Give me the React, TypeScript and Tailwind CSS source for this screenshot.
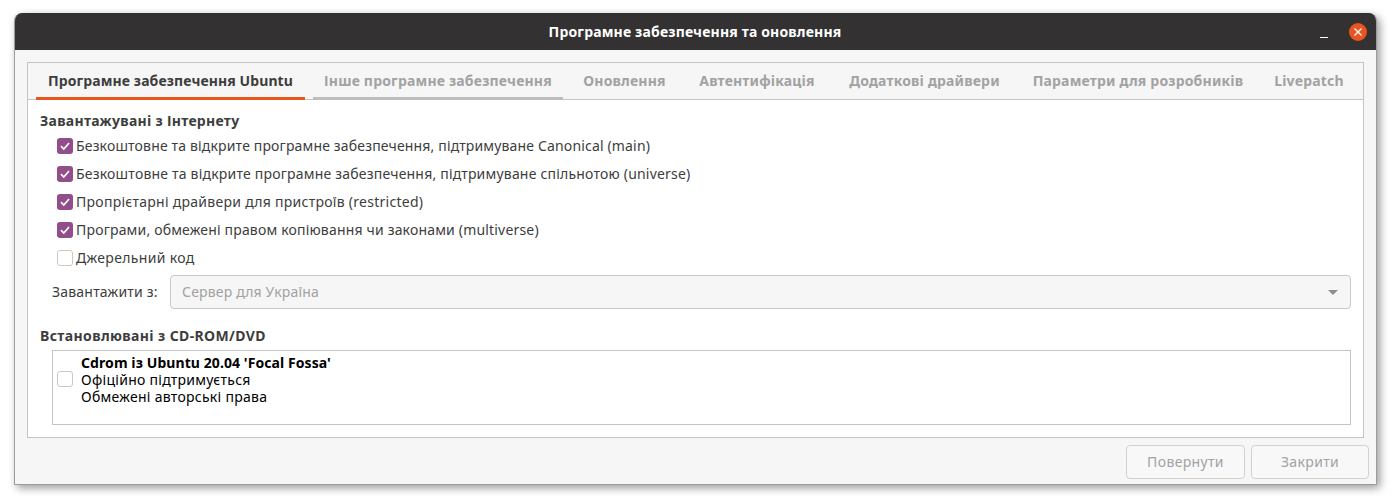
import React from "react";

function Check({ on, className = "" }: { on?: boolean; className?: string }) {
  return on ? (
    <span className={"flex h-4 w-4 shrink-0 items-center justify-center rounded-[3px] bg-[#924d8b] " + className}>
      <svg width="12" height="12" viewBox="0 0 12 12" fill="none">
        <path d="M2 6.2 L4.8 9 L10 3" stroke="#fff" strokeWidth="1.7" />
      </svg>
    </span>
  ) : (
    <span className={"h-4 w-4 shrink-0 rounded-[3px] border border-[#cdc7c2] bg-white " + className} />
  );
}

function Row({ on, text, track = "tracking-[0.16px]" }: { on?: boolean; text: string; track?: string }) {
  return (
    <div className="flex h-7 items-center gap-[3px] pl-[17px] text-[#3d3d3d]">
      <Check on={on} />
      <span className={track}>{text}</span>
    </div>
  );
}

const tabs: [string, string][] = [
  ["Інше програмне забезпечення", "w-[250px] border-[#bdbdbd]"],
  ["Оновлення", "w-[107px] border-transparent"],
  ["Автентифікація", "w-[142px] border-transparent"],
  ["Додаткові драйвери", "w-[177px] border-transparent"],
  ["Параметри для розробників", "w-[234px] border-transparent"],
  ["Livepatch", "w-[92px] border-transparent"],
];

export default function App() {
  return (
    <div className="h-[503px] w-[1395px] bg-white pl-[14px] pt-[13px] font-['Noto_Sans',sans-serif] text-[14px] leading-[20px]">
      <div className="flex h-[472px] w-[1363px] flex-col overflow-hidden rounded-t-[8px] border-x border-b border-[#9c9c9c] bg-[#f6f6f6] shadow-[3px_3px_8px_rgba(0,0,0,0.4)]">
        <div className="-mx-px flex h-[37px] shrink-0 items-center bg-[#333131]">
          <div className="flex-1 pl-[56px] text-center text-[14px] font-bold tracking-[0.17px] text-white">
            Програмне забезпечення та оновлення
          </div>
          <svg width="10" height="10" viewBox="0 0 10 10" className="mr-[19px] mt-[4px]">
            <path d="M0 8.5 H8" stroke="#fff" strokeWidth="1" />
          </svg>
          <span className="mr-[10px] flex h-[18px] w-[18px] items-center justify-center rounded-full bg-[#e95420]">
            <svg width="10" height="10" viewBox="0 0 10 10">
              <path d="M1.5 1.5 L8.5 8.5 M8.5 1.5 L1.5 8.5" stroke="#fff" strokeWidth="1.3" />
            </svg>
          </span>
        </div>

        <div className="mx-[12px] mt-[12px] flex h-[376px] flex-col border border-[#c4c4c4] bg-white">
          <div className="flex h-[37px] shrink-0 gap-[8px] border-b border-[#c4c4c4] bg-[#f6f6f6] pl-[8px] font-bold tracking-[0.18px]">
            <div className="flex h-[37px] w-[269px] items-center justify-center border-b-[3px] border-[#e95420] pt-[2px] text-[#3d3d3d]">
              <span className="tracking-[0.1px]">Програмне забезпечення Ubuntu</span>
            </div>
            {tabs.map(([t, c]) => (
              <div key={t} className={"flex h-[37px] items-center justify-center border-b-[3px] pt-[2px] text-[#a2a2a2] " + c}>
                {t}
              </div>
            ))}
          </div>

          <div className="flex-1 px-[12px]">
            <div className="pt-[11px] font-bold tracking-[0.28px] text-[#3d3d3d]">Завантажувані з Інтернету</div>
            <div className="mt-[1px]">
              <Row on text="Безкоштовне та відкрите програмне забезпечення, підтримуване Canonical (main)" />
              <Row on text="Безкоштовне та відкрите програмне забезпечення, підтримуване спільнотою (universe)" track="tracking-[0.2px]" />
              <Row on text="Пропрієтарні драйвери для пристроїв (restricted)" track="tracking-[0.27px]" />
              <Row on text="Програми, обмежені правом копіювання чи законами (multiverse)" track="tracking-[0.18px]" />
              <Row text="Джерельний код" track="tracking-[0.35px]" />
            </div>
            <div className="mt-[3px] flex h-[34px] items-center pl-[12px] text-[#3d3d3d]">
              <span className="w-[118px] shrink-0 tracking-[0.2px]">Завантажити з:</span>
              <div className="flex h-[34px] flex-1 items-center justify-between rounded-[4px] border border-[#cdc7c2] bg-[#f6f6f6] pl-[11px] pr-[12px] tracking-[0.17px] text-[#a2a2a2]">
                <span>Сервер для Україна</span>
                <span className="h-0 w-0 border-x-[5px] border-t-[5px] border-x-transparent border-t-[#8e8e8e]" />
              </div>
            </div>
            <div className="mt-[17px] font-bold tracking-[0.38px] text-[#3d3d3d]">Встановлювані з CD-ROM/DVD</div>
            <div className="ml-[12px] mt-[4px] flex h-[75px] items-start border border-[#c4c4c4] pl-[4px] pt-[3px] text-black">
              <Check className="mt-[17px]" />
              <div className="ml-[8px] leading-[17px] tracking-[0.28px]">
                <div className="font-bold tracking-[0.08px]">Cdrom із Ubuntu 20.04 'Focal Fossa'</div>
                <div>Офіційно підтримується</div>
                <div>Обмежені авторські права</div>
              </div>
            </div>
          </div>
        </div>

        <div className="flex justify-end gap-[6px] pr-[7px] pt-[7px] tracking-[0.35px] text-[#a2a2a2]">
          <div className="flex h-[34px] w-[119px] items-center justify-center rounded-[4px] border border-[#d5d0cc] bg-[#f8f8f8]">Повернути</div>
          <div className="flex h-[34px] w-[118px] items-center justify-center rounded-[4px] border border-[#d5d0cc] bg-[#f8f8f8]">Закрити</div>
        </div>
      </div>
    </div>
  );
}
